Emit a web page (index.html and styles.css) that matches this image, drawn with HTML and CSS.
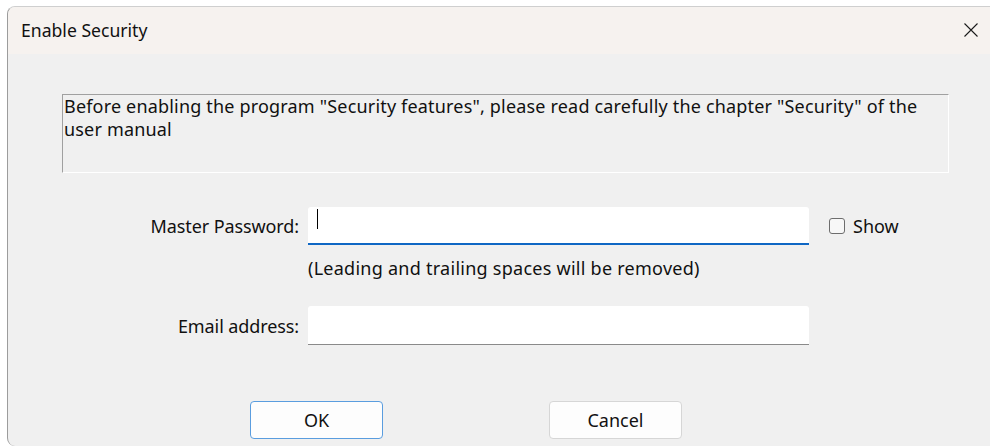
FILE: index.html
```html
<!DOCTYPE html>
<html lang="en">
<head>
<meta charset="utf-8">
<title>Enable Security</title>
<link rel="stylesheet" href="styles.css">
</head>
<body>
<div class="window">
  <div class="titlebar">
    <span class="title">Enable Security</span>
    <svg class="close" width="14" height="14" viewBox="0 0 14 14" aria-label="Close">
      <path d="M0.5 0.5 L13.5 13.5 M13.5 0.5 L0.5 13.5" stroke="#1b1b1b" stroke-width="1.1" fill="none"/>
    </svg>
  </div>
  <div class="content">
    <div class="notice">Before enabling the program "Security features", please read carefully the chapter "Security" of the<br>user manual</div>

    <div class="form">
      <label class="label">Master Password:</label>
      <div class="field field-focus"><span class="caret"></span></div>
      <div class="check"><span class="box"></span><span>Show</span></div>

      <div class="hint">(Leading and trailing spaces will be removed)</div>

      <label class="label">Email address:</label>
      <div class="field"></div>
    </div>

    <div class="buttons">
      <button class="btn btn-default">OK</button>
      <button class="btn">Cancel</button>
    </div>
  </div>
</div>
</body>
</html>
```
FILE: styles.css
```css
html, body {
  margin: 0;
  padding: 0;
  background: #ffffff;
}

body {
  font-family: "Noto Sans", "Open Sans", sans-serif;
  font-size: 18px;
  color: #111;
}

.window {
  margin: 6px 0 0 7px;
  width: 983px;
  height: 440px;
  box-sizing: border-box;
  border-left: 1px solid #9c9c9c;
  border-top: 1px solid #cfcfcf;
  border-radius: 8px 0 0 8px;
  background: #f0f0f0;
  overflow: hidden;
  display: flex;
  flex-direction: column;
}

.titlebar {
  height: 47px;
  flex: none;
  background: #f6f2ef;
  display: flex;
  align-items: center;
  justify-content: space-between;
  padding: 0 12px 0 13px;
}

.title {
  font-size: 17.6px;
  line-height: 22px;
  padding-bottom: 2px;
}

.close {
  display: block;
  margin-bottom: 1px;
}

.content {
  display: flex;
  flex-direction: column;
}

.notice {
  margin: 40px 0 0 54px;
  width: 887px;
  height: 79px;
  box-sizing: border-box;
  border-top: 1px solid #a0a0a0;
  border-left: 1px solid #a0a0a0;
  border-right: 1px solid #ffffff;
  border-bottom: 1px solid #ffffff;
  padding: 0 0 0 1px;
  line-height: 23px;
  letter-spacing: 0.18px;
}

.form {
  margin-top: 34px;
  display: grid;
  grid-template-columns: 291px 501px auto;
  grid-template-rows: 38px 61px 39px;
  column-gap: 9px;
  align-items: center;
}

.label {
  justify-self: end;
  letter-spacing: -0.1px;
}

.field {
  height: 100%;
  background: #ffffff;
  box-sizing: border-box;
  border-bottom: 1px solid #8a8a8a;
  border-radius: 3px 3px 0 0;
}

.field-focus {
  border-bottom: 2px solid #0f67c4;
}

.caret {
  display: block;
  margin: 2px 0 0 9px;
  width: 1px;
  height: 20px;
  background: #000;
}

.check {
  margin-left: 11px;
  display: flex;
  align-items: center;
  gap: 8px;
}

.box {
  width: 14px;
  height: 14px;
  border: 1px solid #6d6d6d;
  border-radius: 3px;
  background: #f7f7f7;
}

.hint {
  grid-column: 2 / 4;
  align-self: start;
  padding-top: 11px;
  line-height: 25px;
  letter-spacing: 0.26px;
}

.buttons {
  margin: 56px 0 0 242px;
  display: flex;
  gap: 166px;
}

.btn {
  width: 133px;
  height: 38px;
  font: inherit;
  color: #111;
  background: #fdfdfd;
  border: 1px solid #d6d6d6;
  border-radius: 4px;
  padding: 0;
}

.btn-default {
  border-color: #5a9ddf;
}
```
